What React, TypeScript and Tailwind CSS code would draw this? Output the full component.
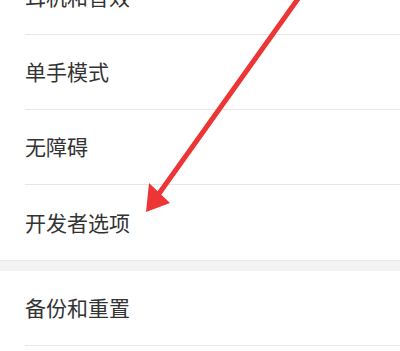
import React from 'react';

const font = { fontFamily: '"Noto Sans CJK SC", "Noto Sans", sans-serif' };

function Row({ label, divider = true }: { label: string; divider?: boolean }) {
  return (
    <div className="pl-[25px] bg-white">
      <div
        className={`h-[75px] flex items-center text-[21px] text-[#333333] ${
          divider ? 'border-b border-[#e6e6e6]' : ''
        }`}
      >
        {label}
      </div>
    </div>
  );
}

export default function App() {
  return (
    <div className="relative w-[400px] h-[351px] overflow-hidden bg-white" style={font}>
      <div className="-mt-[40px]">
        <Row label="耳机和音效" />
        <Row label="单手模式" />
        <Row label="无障碍" />
        <Row label="开发者选项" divider={false} />
        <div className="h-[11px] bg-[#f3f3f3] border-t border-[#e9e9e9]" />
        <Row label="备份和重置" />
      </div>

      {/* red annotation arrow */}
      <svg
        className="absolute inset-0 pointer-events-none"
        width="400"
        height="351"
        viewBox="0 0 400 351"
      >
        <line
          x1="300"
          y1="-4"
          x2="158"
          y2="195"
          stroke="#ee3535"
          strokeWidth="5"
          strokeLinecap="round"
        />
        <polygon points="146,212 149,183 170,203" fill="#ee3535" />
      </svg>
    </div>
  );
}
